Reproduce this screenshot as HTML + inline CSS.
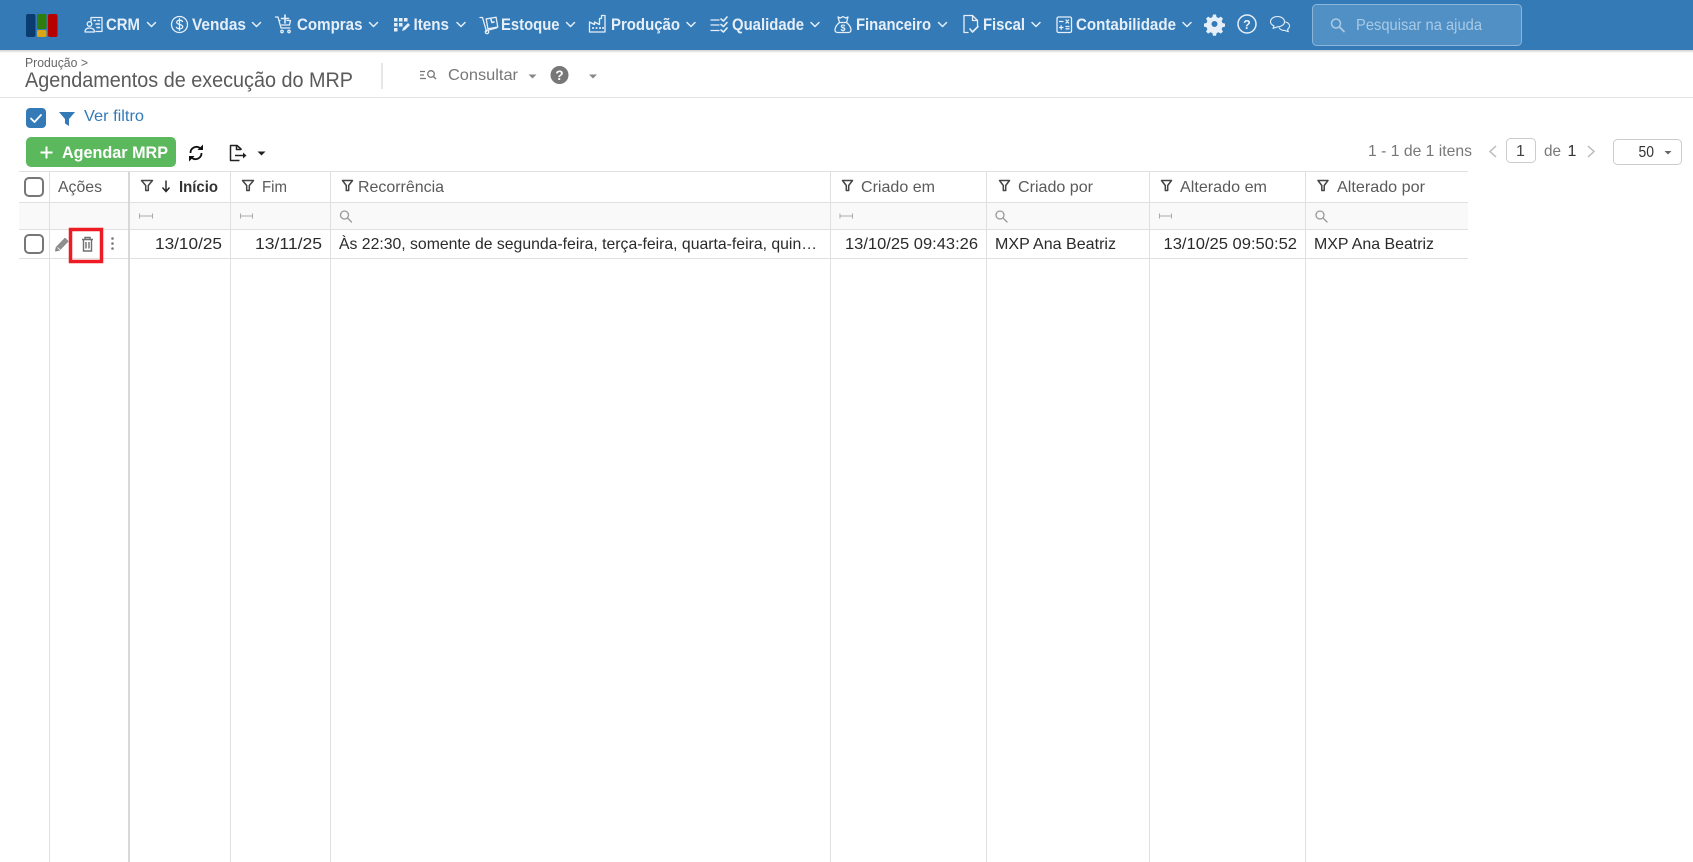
<!DOCTYPE html>
<html lang="pt-BR">
<head>
<meta charset="utf-8">
<title>Agendamentos de execução do MRP</title>
<style>
html,body{margin:0;padding:0;background:#fff;width:1693px;height:862px;overflow:hidden}
svg{display:block;font-family:"Liberation Sans",sans-serif}
.n{font-size:16.5px;font-weight:bold;fill:#e6eff8}
.h{font-size:16px;fill:#5a5a5a}
.d{font-size:16px;fill:#2a2a2a}
.g{font-size:16px;fill:#777}
.w{fill:none;stroke:#e6eff8;stroke-width:1.3;stroke-linecap:round;stroke-linejoin:round}
.c{fill:none;stroke:#e6eff8;stroke-width:1.5;stroke-linecap:round;stroke-linejoin:round}
.f{fill:none;stroke:#444;stroke-width:1.5;stroke-linejoin:round}
.s{fill:none;stroke:#999;stroke-width:1.3;stroke-linecap:round}
.r{fill:none;stroke:#aaa;stroke-width:1}
.l{stroke:#e0e0e0;stroke-width:1}
.cb{fill:#fff;stroke:#777;stroke-width:2}
</style>
</head>
<body>
<svg width="1693" height="862" viewBox="0 0 1693 862" xmlns="http://www.w3.org/2000/svg">
<defs><linearGradient id="sh" x1="0" y1="0" x2="0" y2="1"><stop offset="0" stop-color="#cfcfcf"/><stop offset="1" stop-color="#fff"/></linearGradient></defs>
<!-- top bar -->
<rect x="0" y="50" width="1693" height="3" fill="url(#sh)"/>
<rect x="0" y="0" width="1693" height="50" fill="#337ab7"/>
<!-- logo -->
<rect x="26" y="14" width="9.5" height="23" rx="2" fill="#0b3c70"/>
<rect x="37" y="14" width="9.5" height="15" rx="1.5" fill="#2f7d0c"/>
<rect x="37" y="30" width="9.5" height="7" rx="1.5" fill="#d9a416"/>
<rect x="48" y="14" width="9.5" height="23" rx="2" fill="#b70000"/>

<!-- CRM -->
<g class="w"><path d="M91 21v-3.500h11v14h-6"/><path d="M85 32c0-3 2-4 4.500-4s5 1 5 4z"/><circle cx="89.500" cy="24" r="2.300"/><path d="M94 20.500h1.500M98 20.500h1.500M96 24h3.500M97 27.500h2.500" stroke-width="1.600"/></g>
<text class="n" x="106" y="30" textLength="34" lengthAdjust="spacingAndGlyphs">CRM</text>
<polyline class="c" points="147.500,22.500 151.500,26.500 155.500,22.500"/>
<!-- Vendas -->
<g class="w"><circle cx="179.500" cy="24.500" r="8"/><path d="M182.500 21.500c-.6-1-1.700-1.300-3-1.300-1.500 0-2.800.8-2.800 2.100 0 2.900 6 1.500 6 4.400 0 1.300-1.400 2.100-3.100 2.100-1.400 0-2.600-.5-3.200-1.500M179.500 18.800v11.400"/></g>
<text class="n" x="192" y="30" textLength="54" lengthAdjust="spacingAndGlyphs">Vendas</text>
<polyline class="c" points="252.500,22.500 256.500,26.500 260.500,22.500"/>
<!-- Compras -->
<g class="w"><path d="M275.500 17h2.500l3 11h9"/><path d="M279 20.500h1M287 20.500h3.500l-1 4.500h-8"/><path d="M285 15v8M281.500 18.500h7" stroke-width="1.600"/><circle cx="282" cy="31.500" r="1.200"/><circle cx="289" cy="31.500" r="1.200"/></g>
<text class="n" x="297" y="30" textLength="65.500" lengthAdjust="spacingAndGlyphs">Compras</text>
<polyline class="c" points="369.500,22.500 373.500,26.500 377.500,22.500"/>
<!-- Itens -->
<g fill="#e6eff8"><rect x="394" y="18" width="3.500" height="3.500"/><rect x="399" y="18" width="3.500" height="3.500"/><rect x="404" y="18" width="3.500" height="3.500"/><rect x="394" y="23" width="3.500" height="3.500"/><rect x="399" y="23" width="3.500" height="3.500"/><rect x="394" y="28" width="3.500" height="3.500"/></g>
<path d="M402 31l1-3 5-5 2 2-5 5z" fill="#e6eff8"/>
<text class="n" x="413.500" y="30" textLength="35.500" lengthAdjust="spacingAndGlyphs">Itens</text>
<polyline class="c" points="457,22.500 461,26.500 465,22.500"/>
<!-- Estoque -->
<g class="w"><path d="M480 17.500h2.500l4 14"/><rect x="487" y="18" width="10" height="10" transform="rotate(-10 492 23)"/><path d="M486.500 30.500l10-2.500"/><circle cx="487" cy="32" r="1.700"/><path d="M491 19.500l1 3 2-.5" stroke-width="1.600"/></g>
<text class="n" x="501" y="30" textLength="58.500" lengthAdjust="spacingAndGlyphs">Estoque</text>
<polyline class="c" points="566.500,22.500 570.500,26.500 574.500,22.500"/>
<!-- Producao -->
<g class="w"><path d="M589.500 32v-10l5 2.500v-2.500l5 2.500v-6h2v-3h3.500v16.500z"/><path d="M593 28h.1M596.500 28h.1M600 28h.1M603 28h.1" stroke-width="2"/></g>
<text class="n" x="611" y="30" textLength="69" lengthAdjust="spacingAndGlyphs">Produção</text>
<polyline class="c" points="687,22.500 691,26.500 695,22.500"/>
<!-- Qualidade -->
<g class="w"><path d="M711 20h8M711 25h8M711 30.500h8"/><path d="M721 19l2.500 2 3.500-4M721 24.500l2.500 2 3.500-4M721 30l2.500 2 3.500-4" stroke-width="1.600"/></g>
<text class="n" x="732" y="30" textLength="72" lengthAdjust="spacingAndGlyphs">Qualidade</text>
<polyline class="c" points="811,22.500 815,26.500 819,22.500"/>
<!-- Financeiro -->
<g class="w"><path d="M839.500 22.500l-1.500-5.500 2.500 1 2.500-1.500 2.500 1.500 2.500-1-1.500 5.500"/><path d="M839.500 22.500h7c3 2.500 4.500 5.500 4.500 7.500 0 1.500-1 2.500-2.500 2.500h-11c-1.500 0-2.500-1-2.500-2.500 0-2 1.500-5 4.500-7.500z"/></g>
<text x="843" y="31" font-size="9" font-weight="bold" fill="#e6eff8" text-anchor="middle">$</text>
<text class="n" x="856" y="30" textLength="75" lengthAdjust="spacingAndGlyphs">Financeiro</text>
<polyline class="c" points="938.500,22.500 942.500,26.500 946.500,22.500"/>
<!-- Fiscal -->
<g class="w"><path d="M968 32.500h-4v-17h8.500l5 5v5"/><path d="M972.500 15.500v5h5"/><path d="M970 29l2.500 3 5.500-5.500" stroke-width="1.600"/></g>
<text class="n" x="983" y="30" textLength="42" lengthAdjust="spacingAndGlyphs">Fiscal</text>
<polyline class="c" points="1032,22.500 1036,26.500 1040,22.500"/>
<!-- Contabilidade -->
<g class="w"><rect x="1057" y="17" width="14.500" height="15.500" rx="1.500"/><path d="M1059.500 21.500h3.500M1066 20l2.500 3M1068.500 20l-2.500 3M1059.500 27.500h3.500M1061.200 25.800v3.400M1066 26.500h3M1066 28.800h3"/></g>
<text class="n" x="1076" y="30" textLength="100" lengthAdjust="spacingAndGlyphs">Contabilidade</text>
<polyline class="c" points="1183,22.500 1187,26.500 1191,22.500"/>
<!-- Gear -->
<path fill="#e6eff8" fill-rule="evenodd" d="M1213 14.500h3l.6 2.600 2 .9 2.300-1.400 2.100 2.100-1.400 2.300.9 2 2.500.6v3l-2.500.6-.9 2 1.400 2.300-2.100 2.100-2.300-1.400-2 .9-.6 2.600h-3l-.6-2.600-2-.9-2.300 1.400-2.100-2.100 1.400-2.300-.9-2-2.500-.6v-3l2.500-.6.900-2-1.400-2.300 2.100-2.100 2.300 1.400 2-.9zM1214.500 21a3 3 0 1 0 0 6 3 3 0 0 0 0-6z"/>
<!-- Help -->
<circle cx="1247" cy="24" r="9" fill="none" stroke="#e6eff8" stroke-width="1.500"/>
<text x="1247" y="29" font-size="12.500" font-weight="bold" fill="#e6eff8" text-anchor="middle">?</text>
<!-- Chat -->
<g fill="none" stroke="#e6eff8" stroke-width="1.100" stroke-linecap="round" stroke-linejoin="round"><path d="M1277.500 16.500c4 0 7 2.300 7 5.200s-3 5.100-7 5.100l-4.500 1.600 1-2.500c-2-.9-3.500-2.400-3.500-4.200 0-2.900 3-5.200 7-5.200z"/><path d="M1285.500 22c2.500.6 4 2.200 4 4.100 0 1.300-.7 2.400-2 3.200l.8 2.400-3.800-1.300c-2.300 0-4.300-1-5.300-2.500"/></g>
<!-- Search -->
<rect x="1312.500" y="4.500" width="209" height="41" rx="4" fill="#5190c5" stroke="#8bb5d9" stroke-width="1"/>
<circle cx="1336" cy="23.500" r="4.500" fill="none" stroke="#a9cae6" stroke-width="1.500"/>
<path d="M1339.500 27l4.500 4.500" stroke="#a9cae6" stroke-width="1.800" stroke-linecap="round"/>
<text x="1356" y="30" font-size="16" fill="#a9cae6" textLength="126" lengthAdjust="spacingAndGlyphs">Pesquisar na ajuda</text>

<!-- sub header -->
<rect x="0" y="97" width="1693" height="1" fill="#e3e3e3"/>
<text x="25" y="67" font-size="13" fill="#666" textLength="63" lengthAdjust="spacingAndGlyphs">Produção &gt;</text>
<text x="25" y="87" font-size="21" fill="#5a5a5a" textLength="328" lengthAdjust="spacingAndGlyphs">Agendamentos de execução do MRP</text>
<rect x="381.500" y="63" width="1" height="26" fill="#ccc"/>
<g fill="none" stroke="#777" stroke-width="1.300"><path d="M420 71.500h5M420 75h4M420 78.500h6"/><circle cx="431" cy="74" r="3.300"/><path d="M433.500 76.500l2.500 2.500"/></g>
<text x="448" y="80" font-size="16" fill="#777" textLength="70" lengthAdjust="spacingAndGlyphs">Consultar</text>
<path d="M528.500 74.500h8l-4 4z" fill="#888"/>
<circle cx="559.500" cy="75" r="9" fill="#777"/>
<text x="559.500" y="80" font-size="13.500" font-weight="bold" fill="#fff" text-anchor="middle">?</text>
<path d="M589 74.500h8l-4 4z" fill="#888"/>

<!-- filter row -->
<rect x="26" y="108" width="20" height="20" rx="4" fill="#337ab7"/>
<path d="M31 118.500l3.500 3.500 6.500-7" fill="none" stroke="#fff" stroke-width="1.800" stroke-linecap="round" stroke-linejoin="round"/>
<path d="M59 112h16l-6 7v7l-4-2.500v-4.500z" fill="#337ab7"/>
<text x="84" y="121" font-size="16" fill="#337ab7" textLength="60" lengthAdjust="spacingAndGlyphs">Ver filtro</text>

<!-- toolbar -->
<rect x="26" y="137" width="150" height="30" rx="5" fill="#5cb85c"/>
<path d="M40.500 152.500h12M46.500 146.500v12" stroke="#fff" stroke-width="2"/>
<text x="62" y="158" font-size="16.500" font-weight="bold" fill="#fff" textLength="106" lengthAdjust="spacingAndGlyphs">Agendar MRP</text>
<g fill="none" stroke="#111" stroke-width="1.800"><path d="M190.500 153a6 6 0 0 1 9.500-5"/><path d="M201.500 153a6 6 0 0 1-9.500 5"/></g>
<path d="M203 144.500v5.500h-5.500zM189 161.500v-5.500h5.500z" fill="#111"/>
<g fill="none" stroke="#222" stroke-width="1.500" stroke-linejoin="round"><path d="M241 150v-1l-4-3.500h-6.500v15h9"/><path d="M236.500 145.500v4h4.500"/><path d="M235 155.500h10"/></g>
<path d="M246.500 155.500l-3.500-3v6z" fill="#222"/>
<path d="M257.500 151.500h8l-4 4z" fill="#222"/>

<!-- pagination -->
<text class="g" x="1368" y="156" textLength="104" lengthAdjust="spacingAndGlyphs">1 - 1 de 1 itens</text>
<polyline points="1496,146 1490,151.500 1496,157" fill="none" stroke="#bbb" stroke-width="1.500"/>
<rect x="1506.500" y="138.500" width="29" height="24" rx="4" fill="#fff" stroke="#ccc"/>
<text x="1520.500" y="156" font-size="16" fill="#444" text-anchor="middle">1</text>
<text class="g" x="1544" y="156" textLength="17" lengthAdjust="spacingAndGlyphs">de</text>
<text x="1572" y="156" font-size="16" fill="#333" text-anchor="middle">1</text>
<polyline points="1588,146 1594,151.500 1588,157" fill="none" stroke="#bbb" stroke-width="1.500"/>
<rect x="1613.500" y="139.500" width="68" height="25" rx="4" fill="#fff" stroke="#ccc"/>
<text x="1638.500" y="157" font-size="16" fill="#333" textLength="15.500" lengthAdjust="spacingAndGlyphs">50</text>
<path d="M1664.500 151h7l-3.500 3.500z" fill="#666"/>

<!-- table -->
<rect x="19" y="202" width="1449" height="27" fill="#f9f9f9"/>
<g class="l">
<path d="M19 171.500h1449M19 202.500h1449M19 229.500h1449M19 258.500h1449"/>
<path d="M49.500 172v690M230.500 172v690M330.500 172v690M830.500 172v690M986.500 172v690M1149.500 172v690M1305.500 172v690"/>
</g>
<rect x="128" y="172" width="2" height="690" fill="#d8d8d8"/>

<!-- header -->
<rect class="cb" x="25" y="178" width="18" height="18" rx="4"/>
<text class="h" x="58" y="192" textLength="44" lengthAdjust="spacingAndGlyphs">Ações</text>

<path class="f" d="M141.500 180.500h11l-4.200 5v5h-2.600v-5z"/>
<path d="M166 180.500v10.500M162.500 187.500l3.500 4 3.500-4" fill="none" stroke="#222" stroke-width="1.400"/>
<text x="179" y="192" font-size="16" font-weight="bold" fill="#333" textLength="39" lengthAdjust="spacingAndGlyphs">Início</text>

<path class="f" d="M242.500 180.500h11l-4.200 5v5h-2.600v-5z"/>
<text class="h" x="262" y="192" textLength="25" lengthAdjust="spacingAndGlyphs">Fim</text>

<path class="f" d="M342.500 180.500h10l-3.800 5v5h-2.400v-5z"/>
<text class="h" x="358" y="192" textLength="86" lengthAdjust="spacingAndGlyphs">Recorrência</text>

<path class="f" d="M842.500 180.500h10l-3.800 5v5h-2.400v-5z"/>
<text class="h" x="861" y="192" textLength="74" lengthAdjust="spacingAndGlyphs">Criado em</text>

<path class="f" d="M999.500 180.500h10l-3.800 5v5h-2.400v-5z"/>
<text class="h" x="1018" y="192" textLength="75" lengthAdjust="spacingAndGlyphs">Criado por</text>

<path class="f" d="M1161.500 180.500h10l-3.800 5v5h-2.400v-5z"/>
<text class="h" x="1180" y="192" textLength="87" lengthAdjust="spacingAndGlyphs">Alterado em</text>

<path class="f" d="M1318 180.500h10l-3.800 5v5h-2.400v-5z"/>
<text class="h" x="1337" y="192" textLength="88" lengthAdjust="spacingAndGlyphs">Alterado por</text>

<!-- filter icons -->
<path class="r" d="M139.500 213.500v5M139.500 216h13M152.500 213.500v5"/>
<path class="r" d="M240.500 213.500v5M240.500 216h12M252.500 213.500v5"/>
<path class="r" d="M840 213.500v5M840 216h12.500M852.500 213.500v5"/>
<path class="r" d="M1159.500 213.500v5M1159.500 216h12M1171.500 213.500v5"/>
<g class="s"><circle cx="344.500" cy="215" r="4"/><path d="M347.500 218l4 4"/><circle cx="1000" cy="215" r="4"/><path d="M1003 218l4 4"/><circle cx="1320" cy="215" r="4"/><path d="M1323 218l4 4"/></g>

<!-- row -->
<rect class="cb" x="25" y="235" width="18" height="18" rx="4"/>
<path d="M55.500 251l.8-3.600 8.700-9 3 2.900-8.800 9z" fill="#8f8f8f" stroke="#888" stroke-width="1" stroke-linejoin="round"/>
<path d="M57.500 247.500l2.500 2.300" stroke="#fff" stroke-width=".8"/>
<g fill="none" stroke="#6f6f6f" stroke-width="1.400"><path d="M82 239.500h11M85 239.500v-2h5v2"/><path d="M83.500 239.500v11.500h8v-11.500"/><path d="M86 242v6.500M89 242v6.500"/></g>
<g fill="#777"><circle cx="112.500" cy="238.500" r="1.300"/><circle cx="112.500" cy="243.500" r="1.300"/><circle cx="112.500" cy="248.500" r="1.300"/></g>
<rect x="70.500" y="229.500" width="31" height="32" fill="none" stroke="#ed1c24" stroke-width="3.500"/>

<text class="d" x="155" y="249" textLength="67" lengthAdjust="spacingAndGlyphs">13/10/25</text>
<text class="d" x="255" y="249" textLength="67" lengthAdjust="spacingAndGlyphs">13/11/25</text>
<text class="d" x="339" y="249" textLength="478" lengthAdjust="spacingAndGlyphs">Às 22:30, somente de segunda-feira, terça-feira, quarta-feira, quin…</text>
<text class="d" x="845" y="249" textLength="133" lengthAdjust="spacingAndGlyphs">13/10/25 09:43:26</text>
<text class="d" x="995" y="249" textLength="121" lengthAdjust="spacingAndGlyphs">MXP Ana Beatriz</text>
<text class="d" x="1163.500" y="249" textLength="133.500" lengthAdjust="spacingAndGlyphs">13/10/25 09:50:52</text>
<text class="d" x="1314" y="249" textLength="120" lengthAdjust="spacingAndGlyphs">MXP Ana Beatriz</text>
</svg>
</body>
</html>
